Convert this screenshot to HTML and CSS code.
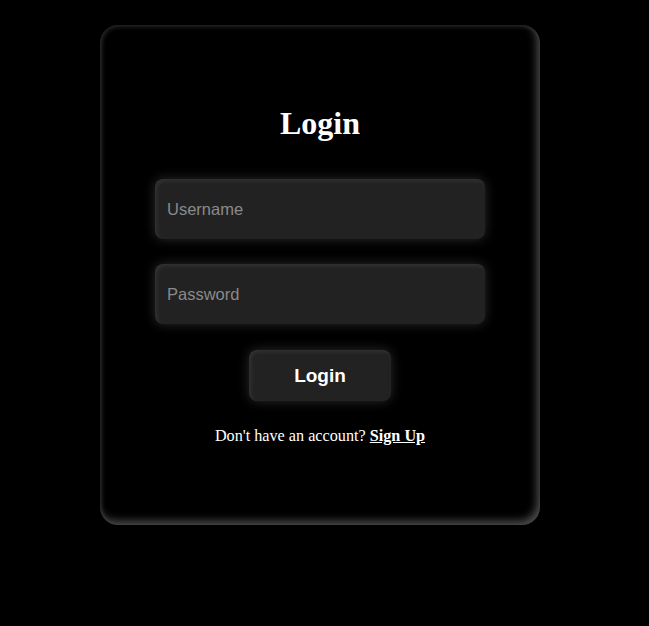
FILE: index.html
```html
<!DOCTYPE html>
<html>
<head>
<meta charset="utf-8">
<link rel="stylesheet" href="styles.css">
</head>
<body>
<div class="card">
  <h1 class="title">Login</h1>
  <input class="field" type="text" placeholder="Username">
  <input class="field" type="password" placeholder="Password">
  <button class="btn">Login</button>
  <p class="note">Don't have an account? <a class="link" href="#">Sign Up</a></p>
</div>
</body>
</html>
```
FILE: styles.css
```css
html, body {
  margin: 0;
  background: #000;
}
body {
  padding: 25px 0 0 100px;
  font-family: "Liberation Serif", "Times New Roman", serif;
  color: #fff;
}
.card {
  box-sizing: border-box;
  width: 440px;
  height: 500px;
  border-radius: 18px;
  background: #000;
  padding-top: 80px;
  display: flex;
  flex-direction: column;
  align-items: center;
  box-shadow: inset -3px -4px 8px rgba(255,255,255,0.3), inset 2px 2px 4px rgba(255,255,255,0.1);
}
.title {
  margin: 0 0 37px;
  font-size: 32px;
  line-height: 37px;
  font-weight: bold;
}
.field {
  box-sizing: border-box;
  width: 330px;
  height: 60px;
  margin: 0 0 25px;
  padding: 0 12px;
  border: none;
  outline: none;
  border-radius: 8px;
  background: #222;
  color: #fff;
  font-family: "Liberation Sans", Arial, sans-serif;
  font-size: 16.5px;
  box-shadow: 0 0 12px rgba(255,255,255,0.17), inset 2px 2px 4px rgba(255,255,255,0.08);
}
.field::placeholder {
  color: #8a8a8a;
}
.btn {
  box-sizing: border-box;
  width: 142px;
  height: 51px;
  margin-top: 1px;
  border: none;
  border-radius: 8px;
  background: #222;
  color: #fff;
  font-family: "Liberation Sans", Arial, sans-serif;
  font-size: 19px;
  font-weight: bold;
  box-shadow: 0 0 12px rgba(255,255,255,0.17), inset 2px 2px 4px rgba(255,255,255,0.08);
}
.note {
  margin: 26px 0 0;
  font-size: 16.2px;
  line-height: 18px;
}
.link {
  color: #fff;
  font-weight: bold;
}
```
